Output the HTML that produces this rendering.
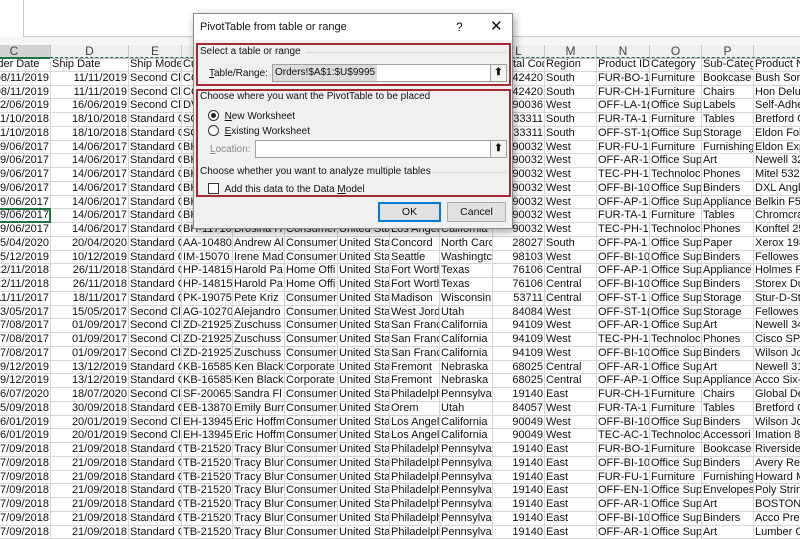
<!DOCTYPE html>
<html><head><meta charset="utf-8"><style>
*{margin:0;padding:0;box-sizing:border-box}
body{width:800px;height:533px;overflow:hidden;background:#fff;position:relative;font-family:"Liberation Sans",Arial,sans-serif;}
#top{position:absolute;left:23px;top:-1px;width:790px;height:38px;border:1px solid #c8c8c8;background:#fff}
#band{position:absolute;left:0;top:37px;width:800px;height:8px;background:#f6f6f6}
#hdr{position:absolute;left:-22px;top:45px;height:13px;display:grid;grid-template-columns:73px 78px 53px 51px 52px 53px 52px 50px 53px 52px 52px 53px 52px 52px 60px;background:#efefef}
#hdr div{border-right:1px solid #c6c6c6;border-bottom:1px solid #bdbdbd;font-size:12px;line-height:12px;text-align:center;color:#444}
#hdr div.sel{background:#d3d3d3;border-bottom:2px solid #217346}
#grid{position:absolute;left:-22px;top:58px;display:grid;grid-template-columns:73px 78px 53px 51px 52px 53px 52px 50px 53px 52px 52px 53px 52px 52px 60px;grid-auto-rows:13.75px}
#grid div{border-right:1px solid #d6d6d6;border-bottom:1px solid #d6d6d6;font-size:11px;line-height:13px;white-space:nowrap;overflow:hidden;padding:0 1px;color:#111}
#grid div.r{text-align:right}
#dash{position:absolute;left:0;top:57px;width:800px;border-top:1px dashed #217346}
#selc{position:absolute;left:-2px;top:208px;width:53px;height:15px;border:2px solid #217346}
#dlg{position:absolute;left:193px;top:13px;width:320px;height:216px;background:#f0f0f0;border:1px solid #8a8a8a;box-shadow:2px 3px 8px rgba(0,0,0,.35);font-size:10px;color:#111}
#ttl{position:absolute;left:0;top:0;width:318px;height:26px;background:#fff;font-size:11px;line-height:26px;padding-left:6px}
.box{position:absolute;border:2px solid #a52a36}
.lbl{position:absolute;white-space:nowrap}
.inp{position:absolute;background:#fff;border:1px solid #a0a0a0}
.ub{position:absolute;width:17px;border:1px solid #a0a0a0;background:#f3f3f3;text-align:center;font-size:10px;font-weight:bold}
.sep{position:absolute;height:1px;background:#d8d8d8}
.btn{position:absolute;height:20px;background:#e1e1e1;border:1px solid #adadad;text-align:center;line-height:18px;font-size:10.5px}
</style></head><body>
<div id="top"></div>
<div id="band"></div>
<div id="hdr"><div class="sel">C</div><div>D</div><div>E</div><div>F</div><div>G</div><div>H</div><div>I</div><div>J</div><div>K</div><div>L</div><div>M</div><div>N</div><div>O</div><div>P</div><div></div></div>
<div id="grid">
<div>&nbsp;&nbsp;Order Date</div><div>Ship Date</div><div>Ship Mode</div><div>Customer ID</div><div>Customer Name</div><div>Segment</div><div>Country</div><div>City</div><div>State</div><div>Postal Code</div><div>Region</div><div>Product ID</div><div>Category</div><div>Sub-Category</div><div>Product Name</div>
<div class="r">08/11/2019</div><div class="r">11/11/2019</div><div>Second Cl</div><div>CG-12520</div><div>Claire Gute</div><div>Consumer</div><div>United Sta</div><div>Henderson</div><div>Kentucky</div><div class="r">42420</div><div>South</div><div>FUR-BO-1</div><div>Furniture</div><div>Bookcase</div><div>Bush Som</div>
<div class="r">08/11/2019</div><div class="r">11/11/2019</div><div>Second Cl</div><div>CG-12520</div><div>Claire Gute</div><div>Consumer</div><div>United Sta</div><div>Henderson</div><div>Kentucky</div><div class="r">42420</div><div>South</div><div>FUR-CH-1</div><div>Furniture</div><div>Chairs</div><div>Hon Delu</div>
<div class="r">12/06/2019</div><div class="r">16/06/2019</div><div>Second Cl</div><div>DV-13045</div><div>Darrin Van</div><div>Corporate</div><div>United Sta</div><div>Los Angel</div><div>California</div><div class="r">90036</div><div>West</div><div>OFF-LA-1(</div><div>Office Sup</div><div>Labels</div><div>Self-Adhe</div>
<div class="r">11/10/2018</div><div class="r">18/10/2018</div><div>Standard C</div><div>SO-20335</div><div>Sean O'Do</div><div>Consumer</div><div>United Sta</div><div>Fort Laud</div><div>Florida</div><div class="r">33311</div><div>South</div><div>FUR-TA-1</div><div>Furniture</div><div>Tables</div><div>Bretford C</div>
<div class="r">11/10/2018</div><div class="r">18/10/2018</div><div>Standard C</div><div>SO-20335</div><div>Sean O'Do</div><div>Consumer</div><div>United Sta</div><div>Fort Laud</div><div>Florida</div><div class="r">33311</div><div>South</div><div>OFF-ST-1(</div><div>Office Sup</div><div>Storage</div><div>Eldon Fol</div>
<div class="r">09/06/2017</div><div class="r">14/06/2017</div><div>Standard C</div><div>BH-11710</div><div>Brosina H</div><div>Consumer</div><div>United Sta</div><div>Los Angel</div><div>California</div><div class="r">90032</div><div>West</div><div>FUR-FU-1</div><div>Furniture</div><div>Furnishing</div><div>Eldon Exp</div>
<div class="r">09/06/2017</div><div class="r">14/06/2017</div><div>Standard C</div><div>BH-11710</div><div>Brosina H</div><div>Consumer</div><div>United Sta</div><div>Los Angel</div><div>California</div><div class="r">90032</div><div>West</div><div>OFF-AR-1</div><div>Office Sup</div><div>Art</div><div>Newell 32</div>
<div class="r">09/06/2017</div><div class="r">14/06/2017</div><div>Standard C</div><div>BH-11710</div><div>Brosina H</div><div>Consumer</div><div>United Sta</div><div>Los Angel</div><div>California</div><div class="r">90032</div><div>West</div><div>TEC-PH-1</div><div>Technoloc</div><div>Phones</div><div>Mitel 5320</div>
<div class="r">09/06/2017</div><div class="r">14/06/2017</div><div>Standard C</div><div>BH-11710</div><div>Brosina H</div><div>Consumer</div><div>United Sta</div><div>Los Angel</div><div>California</div><div class="r">90032</div><div>West</div><div>OFF-BI-10</div><div>Office Sup</div><div>Binders</div><div>DXL Angl</div>
<div class="r">09/06/2017</div><div class="r">14/06/2017</div><div>Standard C</div><div>BH-11710</div><div>Brosina H</div><div>Consumer</div><div>United Sta</div><div>Los Angel</div><div>California</div><div class="r">90032</div><div>West</div><div>OFF-AP-1</div><div>Office Sup</div><div>Appliance</div><div>Belkin F5</div>
<div class="r">09/06/2017</div><div class="r">14/06/2017</div><div>Standard C</div><div>BH-11710</div><div>Brosina H</div><div>Consumer</div><div>United Sta</div><div>Los Angel</div><div>California</div><div class="r">90032</div><div>West</div><div>FUR-TA-1</div><div>Furniture</div><div>Tables</div><div>Chromcra</div>
<div class="r">09/06/2017</div><div class="r">14/06/2017</div><div>Standard C</div><div>BH-11710</div><div>Brosina H</div><div>Consumer</div><div>United Sta</div><div>Los Angel</div><div>California</div><div class="r">90032</div><div>West</div><div>TEC-PH-1</div><div>Technoloc</div><div>Phones</div><div>Konftel 25</div>
<div class="r">15/04/2020</div><div class="r">20/04/2020</div><div>Standard C</div><div>AA-10480</div><div>Andrew Al</div><div>Consumer</div><div>United Sta</div><div>Concord</div><div>North Carc</div><div class="r">28027</div><div>South</div><div>OFF-PA-1</div><div>Office Sup</div><div>Paper</div><div>Xerox 198</div>
<div class="r">05/12/2019</div><div class="r">10/12/2019</div><div>Standard C</div><div>IM-15070</div><div>Irene Mad</div><div>Consumer</div><div>United Sta</div><div>Seattle</div><div>Washingtc</div><div class="r">98103</div><div>West</div><div>OFF-BI-10</div><div>Office Sup</div><div>Binders</div><div>Fellowes</div>
<div class="r">22/11/2018</div><div class="r">26/11/2018</div><div>Standard C</div><div>HP-14815</div><div>Harold Pa</div><div>Home Offi</div><div>United Sta</div><div>Fort Worth</div><div>Texas</div><div class="r">76106</div><div>Central</div><div>OFF-AP-1</div><div>Office Sup</div><div>Appliance</div><div>Holmes F</div>
<div class="r">22/11/2018</div><div class="r">26/11/2018</div><div>Standard C</div><div>HP-14815</div><div>Harold Pa</div><div>Home Offi</div><div>United Sta</div><div>Fort Worth</div><div>Texas</div><div class="r">76106</div><div>Central</div><div>OFF-BI-10</div><div>Office Sup</div><div>Binders</div><div>Storex Du</div>
<div class="r">11/11/2017</div><div class="r">18/11/2017</div><div>Standard C</div><div>PK-19075</div><div>Pete Kriz</div><div>Consumer</div><div>United Sta</div><div>Madison</div><div>Wisconsin</div><div class="r">53711</div><div>Central</div><div>OFF-ST-1</div><div>Office Sup</div><div>Storage</div><div>Stur-D-Sto</div>
<div class="r">13/05/2017</div><div class="r">15/05/2017</div><div>Second Cl</div><div>AG-10270</div><div>Alejandro</div><div>Consumer</div><div>United Sta</div><div>West Jord</div><div>Utah</div><div class="r">84084</div><div>West</div><div>OFF-ST-1(</div><div>Office Sup</div><div>Storage</div><div>Fellowes</div>
<div class="r">27/08/2017</div><div class="r">01/09/2017</div><div>Second Cl</div><div>ZD-21925</div><div>Zuschuss</div><div>Consumer</div><div>United Sta</div><div>San Franc</div><div>California</div><div class="r">94109</div><div>West</div><div>OFF-AR-1</div><div>Office Sup</div><div>Art</div><div>Newell 34</div>
<div class="r">27/08/2017</div><div class="r">01/09/2017</div><div>Second Cl</div><div>ZD-21925</div><div>Zuschuss</div><div>Consumer</div><div>United Sta</div><div>San Franc</div><div>California</div><div class="r">94109</div><div>West</div><div>TEC-PH-1</div><div>Technoloc</div><div>Phones</div><div>Cisco SPA</div>
<div class="r">27/08/2017</div><div class="r">01/09/2017</div><div>Second Cl</div><div>ZD-21925</div><div>Zuschuss</div><div>Consumer</div><div>United Sta</div><div>San Franc</div><div>California</div><div class="r">94109</div><div>West</div><div>OFF-BI-10</div><div>Office Sup</div><div>Binders</div><div>Wilson Jo</div>
<div class="r">09/12/2019</div><div class="r">13/12/2019</div><div>Standard C</div><div>KB-16585</div><div>Ken Black</div><div>Corporate</div><div>United Sta</div><div>Fremont</div><div>Nebraska</div><div class="r">68025</div><div>Central</div><div>OFF-AR-1</div><div>Office Sup</div><div>Art</div><div>Newell 31</div>
<div class="r">09/12/2019</div><div class="r">13/12/2019</div><div>Standard C</div><div>KB-16585</div><div>Ken Black</div><div>Corporate</div><div>United Sta</div><div>Fremont</div><div>Nebraska</div><div class="r">68025</div><div>Central</div><div>OFF-AP-1(</div><div>Office Sup</div><div>Appliance</div><div>Acco Six-</div>
<div class="r">16/07/2020</div><div class="r">18/07/2020</div><div>Second Cl</div><div>SF-20065</div><div>Sandra Fl</div><div>Consumer</div><div>United Sta</div><div>Philadelph</div><div>Pennsylva</div><div class="r">19140</div><div>East</div><div>FUR-CH-1</div><div>Furniture</div><div>Chairs</div><div>Global De</div>
<div class="r">25/09/2018</div><div class="r">30/09/2018</div><div>Standard C</div><div>EB-13870</div><div>Emily Burr</div><div>Consumer</div><div>United Sta</div><div>Orem</div><div>Utah</div><div class="r">84057</div><div>West</div><div>FUR-TA-1</div><div>Furniture</div><div>Tables</div><div>Bretford C</div>
<div class="r">16/01/2019</div><div class="r">20/01/2019</div><div>Second Cl</div><div>EH-13945</div><div>Eric Hoffm</div><div>Consumer</div><div>United Sta</div><div>Los Angel</div><div>California</div><div class="r">90049</div><div>West</div><div>OFF-BI-10</div><div>Office Sup</div><div>Binders</div><div>Wilson Jo</div>
<div class="r">16/01/2019</div><div class="r">20/01/2019</div><div>Second Cl</div><div>EH-13945</div><div>Eric Hoffm</div><div>Consumer</div><div>United Sta</div><div>Los Angel</div><div>California</div><div class="r">90049</div><div>West</div><div>TEC-AC-1</div><div>Technoloc</div><div>Accessori</div><div>Imation 8G</div>
<div class="r">17/09/2018</div><div class="r">21/09/2018</div><div>Standard C</div><div>TB-21520</div><div>Tracy Blur</div><div>Consumer</div><div>United Sta</div><div>Philadelph</div><div>Pennsylva</div><div class="r">19140</div><div>East</div><div>FUR-BO-1</div><div>Furniture</div><div>Bookcase</div><div>Riverside</div>
<div class="r">17/09/2018</div><div class="r">21/09/2018</div><div>Standard C</div><div>TB-21520</div><div>Tracy Blur</div><div>Consumer</div><div>United Sta</div><div>Philadelph</div><div>Pennsylva</div><div class="r">19140</div><div>East</div><div>OFF-BI-10</div><div>Office Sup</div><div>Binders</div><div>Avery Re</div>
<div class="r">17/09/2018</div><div class="r">21/09/2018</div><div>Standard C</div><div>TB-21520</div><div>Tracy Blur</div><div>Consumer</div><div>United Sta</div><div>Philadelph</div><div>Pennsylva</div><div class="r">19140</div><div>East</div><div>FUR-FU-1</div><div>Furniture</div><div>Furnishing</div><div>Howard M</div>
<div class="r">17/09/2018</div><div class="r">21/09/2018</div><div>Standard C</div><div>TB-21520</div><div>Tracy Blur</div><div>Consumer</div><div>United Sta</div><div>Philadelph</div><div>Pennsylva</div><div class="r">19140</div><div>East</div><div>OFF-EN-1</div><div>Office Sup</div><div>Envelopes</div><div>Poly Strin</div>
<div class="r">17/09/2018</div><div class="r">21/09/2018</div><div>Standard C</div><div>TB-21520</div><div>Tracy Blur</div><div>Consumer</div><div>United Sta</div><div>Philadelph</div><div>Pennsylva</div><div class="r">19140</div><div>East</div><div>OFF-AR-1</div><div>Office Sup</div><div>Art</div><div>BOSTON</div>
<div class="r">17/09/2018</div><div class="r">21/09/2018</div><div>Standard C</div><div>TB-21520</div><div>Tracy Blur</div><div>Consumer</div><div>United Sta</div><div>Philadelph</div><div>Pennsylva</div><div class="r">19140</div><div>East</div><div>OFF-BI-10</div><div>Office Sup</div><div>Binders</div><div>Acco Pre</div>
<div class="r">17/09/2018</div><div class="r">21/09/2018</div><div>Standard C</div><div>TB-21520</div><div>Tracy Blur</div><div>Consumer</div><div>United Sta</div><div>Philadelph</div><div>Pennsylva</div><div class="r">19140</div><div>East</div><div>OFF-AR-1</div><div>Office Sup</div><div>Art</div><div>Lumber C</div>
</div>
<div id="dash"></div>
<div id="selc"></div>

<div id="dlg">
  <div id="ttl">PivotTable from table or range<span style="position:absolute;left:262px;font-size:12px">?</span><span style="position:absolute;left:296px;font-size:15px">✕</span></div>
  <div class="box" style="left:2px;top:29px;width:315px;height:43px"></div>
  <div class="lbl" style="left:6px;top:32px">Select a table or range</div>
  <div class="sep" style="left:112px;top:38px;width:201px"></div>
  <div class="lbl" style="left:15px;top:54px"><u>T</u>able/Range:</div>
  <div class="inp" style="left:78px;top:50px;width:219px;height:18px"><span style="background:#dcdcdc;padding:0 2px;line-height:16px;display:inline-block">Orders!$A$1:$U$9995</span></div>
  <div class="ub" style="left:296px;top:50px;height:18px;line-height:16px">⬆</div>
  <div class="box" style="left:2px;top:75px;width:315px;height:108px"></div>
  <div class="lbl" style="left:6px;top:77px">Choose where you want the PivotTable to be placed</div>
  <div class="lbl" style="left:14px;top:96px"><span style="display:inline-block;width:11px;height:11px;border:1px solid #333;border-radius:50%;background:#fff;vertical-align:-2px;position:relative"><span style="position:absolute;left:2px;top:2px;width:5px;height:5px;border-radius:50%;background:#222"></span></span>&nbsp;&nbsp;<u>N</u>ew Worksheet</div>
  <div class="lbl" style="left:14px;top:111px"><span style="display:inline-block;width:11px;height:11px;border:1px solid #333;border-radius:50%;background:#fff;vertical-align:-2px"></span>&nbsp;&nbsp;<u>E</u>xisting Worksheet</div>
  <div class="lbl" style="left:16px;top:130px;color:#8a8a8a"><u>L</u>ocation:</div>
  <div class="inp" style="left:61px;top:126px;width:236px;height:18px"></div>
  <div class="ub" style="left:296px;top:126px;height:18px;line-height:16px">⬆</div>
  <div class="lbl" style="left:6px;top:152px">Choose whether you want to analyze multiple tables</div>
  <div class="sep" style="left:238px;top:158px;width:75px"></div>
  <div class="lbl" style="left:14px;top:169px"><span style="display:inline-block;width:11px;height:11px;border:1px solid #333;background:#fff;vertical-align:-2px"></span>&nbsp;&nbsp;Add this data to the Data <u>M</u>odel</div>
  <div class="btn" style="left:184px;top:188px;width:63px;border:2px solid #0078d7;line-height:16px">OK</div>
  <div class="btn" style="left:253px;top:188px;width:59px">Cancel</div>
</div>
</body></html>
